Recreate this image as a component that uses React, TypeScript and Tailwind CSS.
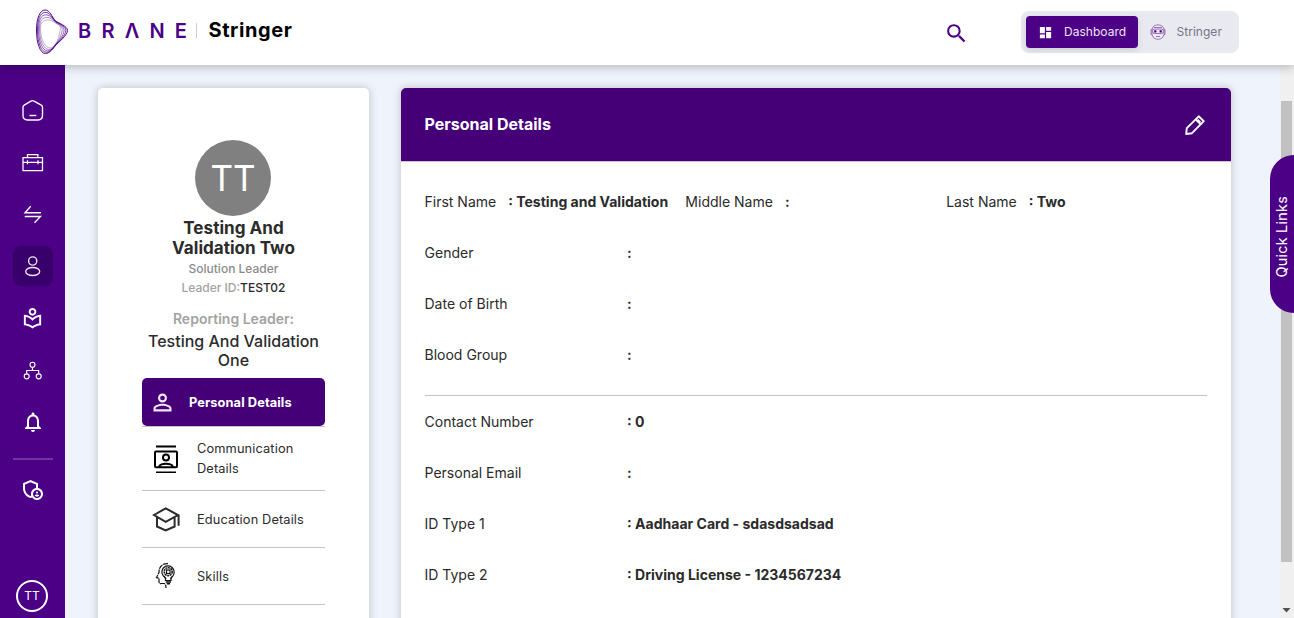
import type { ReactNode } from "react";
import {
  MdDashboard,
  MdNotificationsNone,
  MdOutlineAdminPanelSettings,
  MdOutlineLocalLibrary,
  MdPersonOutline,
  MdSearch,
} from "react-icons/md";

const OUTER = [10, 2, 15, 2, 17, 9, 20, 12.5, 24, 15.5, 32.5, 18, 32.5, 22.5, 32.5, 27, 24, 34, 20, 38, 17, 42, 14, 45.5, 10.5, 45.5, 5, 45.5, 1.5, 35, 1.5, 22, 1.5, 10, 5, 2, 10, 2];
const INNER = [9, 13, 14, 10, 19, 14, 22, 16, 25, 17, 26, 19, 25, 23, 24, 28, 23, 33, 20.5, 36, 19, 39, 17, 40, 15, 40, 11, 40, 6.5, 33, 6, 26, 5, 20, 5, 15, 9, 13];

function ringPath(t: number) {
  const p = OUTER.map((v, i) => (v + (INNER[i] - v) * t).toFixed(2));
  return `M${p.slice(0, 2).join(" ")}C${p.slice(2).join(" ")}Z`;
}

function BraneMark() {
  return (
    <svg width="34" height="48" viewBox="0 0 34 48" fill="none" stroke="#4c0085">
      {[0, 0.22, 0.46, 0.72, 1].map((t) => (
        <path key={t} d={ringPath(t)} strokeWidth={0.95 - t * 0.4} strokeOpacity={1 - t * 0.4} />
      ))}
    </svg>
  );
}

function Logo() {
  return (
    <div className="flex h-full items-center">
      <div className="mt-[2px]">
        <BraneMark />
      </div>
      <div className="mb-px ml-[9px] flex w-[109px] justify-between text-[20px] leading-none font-semibold text-[#4c0085]">
        <span>B</span>
        <span>R</span>
        <span>Λ</span>
        <span>N</span>
        <span>E</span>
      </div>
      <div className="mb-px ml-[9px] h-[15px] w-px bg-[#ccc]" />
      <span className="mb-[3px] ml-[11.5px] text-[20px] font-bold tracking-[0.6px] text-black">Stringer</span>
    </div>
  );
}

function RobotIcon() {
  return (
    <svg width="16" height="16" viewBox="0 0 16 16" fill="none" stroke="#8a55b0" strokeWidth="0.8">
      <path d="M3 3C5 .2 11 .2 13 3C14.5 5 14.5 11 13 13C11 16 5 16 3 13C1.5 11 1.5 5 3 3Z" />
      <path d="M2 5.5H1V10.5H2M14 5.5H15V10.5H14M4 3.5H12" />
      <rect x="2.5" y="5" width="11" height="4.5" rx="2" />
      <path d="M6 12.5H10" />
      <path d="M4.2 6.2h2.2v2.2h-2.2zM9.6 6.2h2.2v2.2h-2.2z" fill="#4c0085" stroke="none" />
    </svg>
  );
}

function Header() {
  return (
    <header className="relative z-10 flex h-[65px] shrink-0 items-center bg-white pr-[55px] pl-[35px] shadow-[0_2px_10px_rgba(0,0,0,0.25)]">
      <div className="h-full flex-1 pb-[3px]">
        <Logo />
      </div>
      <MdSearch className="mt-px mr-[52px] size-[25px] text-[#4c0085]" />
      <div className="mb-px flex h-[42px] w-[218px] items-center rounded-lg bg-[#e9eaef] pl-[5px] text-[12px] tracking-[0.03px]">
        <div className="flex h-8 w-[112px] items-center rounded bg-[#4c0085] pl-[12px] text-[#eee5f5] shadow-[0_2px_6px_rgba(0,0,0,0.12)]">
          <MdDashboard className="size-[15px] text-white" />
          <span className="ml-[11px]">Dashboard</span>
        </div>
        <div className="flex items-center pl-[11.5px] text-[#74758b]">
          <RobotIcon />
          <span className="ml-[11px]">Stringer</span>
        </div>
      </div>
    </header>
  );
}

function NavItem({ active, children }: { active?: boolean; children: ReactNode }) {
  return (
    <div className={`flex size-10 items-center justify-center rounded-lg ${active ? "bg-[#38006a]" : ""}`}>
      {children}
    </div>
  );
}

function Sidebar() {
  const line = { width: 24, height: 24, viewBox: "0.5 -0.5 24 24", fill: "none", stroke: "white", strokeWidth: 1.35 };
  return (
    <aside className="flex w-[65px] shrink-0 flex-col items-center bg-[#4c0085] pt-[25px] text-white">
      <div className="flex flex-col gap-3">
        <NavItem>
          <svg {...line}>
            <path d="M2.5 8.8Q2.5 7.4 3.7 6.6L10.4 2.6Q12 1.6 13.5 2.6L20.8 6.6Q22 7.3 22 8.8V16.8Q22 21.5 17.5 21.5H7Q2.5 21.5 2.5 17Z" />
            <path d="M9 17H15.8" strokeWidth="1.4" />
          </svg>
        </NavItem>
        <NavItem>
          <svg {...line} strokeWidth="1.25">
            <path d="M2.5 7H22V20H2.5ZM7 7V4.2H17.4V7M2.5 11.8H22M7 9.7V13.8M17.5 9.7V13.8" />
          </svg>
        </NavItem>
        <NavItem>
          <svg {...line}>
            <path d="M20.5 10.2H4.5L10.2 3.8M4.2 14H20L14 20.2" />
          </svg>
        </NavItem>
        <NavItem active>
          <svg {...line} strokeOpacity=".9">
            <circle cx="12.2" cy="6.5" r="4.1" />
            <ellipse cx="12.2" cy="17" rx="7" ry="4" />
          </svg>
        </NavItem>
        <NavItem>
          <MdOutlineLocalLibrary className="size-[23px]" />
        </NavItem>
        <NavItem>
          <svg {...line} strokeWidth="1.15">
            <circle cx="12" cy="6.2" r="2.5" />
            <circle cx="6.2" cy="17.8" r="2.5" />
            <circle cx="18.2" cy="17.8" r="2.5" />
            <path d="M12 8.7V12M6.2 15.3V12H18.2V15.3" />
          </svg>
        </NavItem>
        <NavItem>
          <MdNotificationsNone className="size-6" />
        </NavItem>
      </div>
      <div className="mt-4 h-[2px] w-10 bg-[#70369d]" />
      <div className="mt-[9px] mr-[2px]">
        <NavItem>
          <MdOutlineAdminPanelSettings className="size-6" />
        </NavItem>
      </div>
      <div className="mt-auto mr-px mb-[6px] flex size-8 items-center justify-center rounded-full border-2 border-white text-[12px]">
        TT
      </div>
    </aside>
  );
}

function ContactsIcon() {
  return (
    <svg width="28" height="28" viewBox="0 0 28 28" fill="none" stroke="black" strokeWidth="2">
      <path d="M4 1.5H24M4 27.5H24" />
      <rect x="3" y="6.5" width="22" height="15.8" rx="1" />
      <circle cx="14" cy="12.5" r="3" />
      <path d="M7 21.8C8.5 17.7 19.5 17.7 21 21.8" />
    </svg>
  );
}

function GraduationIcon() {
  return (
    <svg width="28" height="28" viewBox="0 0 28 28" fill="none" stroke="#2b2b2b" strokeWidth="2">
      <path d="M2 10L13.7 3.3L26 10L13.7 16.9ZM5 12V21.5L13.7 25.4L22.6 21.5V12M26.6 9.8V20.7" />
    </svg>
  );
}

function SkillsIcon() {
  return (
    <svg width="28" height="28" viewBox="0 0 28 28" fill="none" stroke="#111" strokeWidth="1.2">
      <path d="M16 1.7C10 1.4 6.8 5 7 10.5L4.5 15.5L7 16.2V20Q7 22 9.5 21.5H12Q14 21.8 14 26" strokeDasharray="5 .7" />
      <path d="M13.5 16C6.5 11 11 3.8 16 3.8S25.2 11 19 16V18.5H13.5Z" />
      <circle cx="16.2" cy="9.7" r="4" strokeWidth="1.5" strokeDasharray="2 .6" />
      <rect x="14.5" y="8" width="3.5" height="3.5" />
      <path d="M13.8 20H19M14.8 21.8H18" strokeWidth="1.6" />
      <path d="M12 14L14 17M20.5 14L18.5 17" />
    </svg>
  );
}

function MenuRow({ icon, label, height }: { icon: ReactNode; label: string; height: string }) {
  return (
    <div className={`flex items-center border-b border-[#c4c4c4] pl-[10px] ${height}`}>
      <div className="flex w-7 shrink-0 justify-center">{icon}</div>
      <span className="mt-px ml-[17px] w-[112px] text-[12.8px] leading-5 tracking-[0.12px]">{label}</span>
    </div>
  );
}

function ProfileCard() {
  return (
    <section className="flex h-[600px] w-[271px] shrink-0 flex-col items-center rounded-[5px] bg-white pt-[52px] text-center text-[#2b2b2b] shadow-[0_0_9px_rgba(0,0,0,0.22)]">
      <div className="mr-px flex size-[76px] shrink-0 items-center justify-center rounded-full bg-[#808080] pt-px text-[35px] text-white">
        TT
      </div>
      <h1 className="mt-[2px] w-[150px] text-[17.1px] leading-5 font-bold">Testing And Validation Two</h1>
      <p className="mt-px text-[12px] leading-[19px] font-medium text-[#8b8b8b]">Solution Leader</p>
      <p className="text-[12px] leading-[19px] font-medium text-[#a3a3a3]">
        Leader ID:<span className="text-[#2b2b2b]">TEST02</span>
      </p>
      <p className="mt-3 text-[14px] leading-5 font-semibold text-[#a3a3a3]">Reporting Leader:</p>
      <p className="mt-[3px] w-[180px] text-[16px] leading-[19px] font-medium">Testing And Validation One</p>
      <nav className="mt-[8px] w-[183px] text-left">
        <div className="flex h-12 items-center rounded-[5px] bg-[#450078] pl-[7px] text-[12.8px] font-bold tracking-[0.1px] text-white">
          <MdPersonOutline className="size-[27px] text-[#f0e8f6]" />
          <span className="mt-[2px] ml-[13px]">Personal Details</span>
        </div>
        <div className="h-px bg-[#c4c4c4]" />
        <MenuRow height="h-16" label="Communication Details" icon={<ContactsIcon />} />
        <MenuRow height="h-[57px]" label="Education Details" icon={<GraduationIcon />} />
        <MenuRow height="h-[57px]" label="Skills" icon={<SkillsIcon />} />
      </nav>
    </section>
  );
}

function Row({ label, value = "" }: { label: string; value?: string }) {
  return (
    <div className="flex h-[51px] items-center">
      <span className="w-[202.6px]">{label}</span>
      <span className="font-bold">: {value}</span>
    </div>
  );
}

function NameCell({ label, value = "" }: { label: string; value?: string }) {
  return (
    <div className="flex items-center whitespace-nowrap">
      <span className="mr-3">{label}</span>
      <span className="font-bold">: {value}</span>
    </div>
  );
}

function DetailsCard() {
  return (
    <section className="h-[600px] w-[830px] shrink-0 rounded-[5px] bg-white shadow-[0_0_9px_rgba(0,0,0,0.22)]">
      <div className="flex h-[73px] items-center justify-between rounded-t-[5px] bg-[#450078] pr-[24px] pl-[24px] text-white">
        <h2 className="mb-[2px] text-[16px] font-bold">Personal Details</h2>
        <svg width="24" height="24" viewBox="0 0 24 24" fill="none" stroke="white" strokeWidth="1.9" strokeLinejoin="round">
          <path d="M3.2 21L3.8 15.2L15.7 3.3L20.8 8.2L9 20.2Z" />
          <path d="M12.6 6.3L17.7 11.3M14.6 6.7L17.4 9.4" />
        </svg>
      </div>
      <div className="border-t border-[#c9c4ce] pr-[23.5px] pl-[24px] pt-[14px] text-[14.03px] text-[#2b2b2b]">
        <div className="grid h-[51px] grid-cols-3">
          <NameCell label="First Name" value="Testing and Validation" />
          <NameCell label="Middle Name" />
          <NameCell label="Last Name" value="Two" />
        </div>
        <Row label="Gender" />
        <Row label="Date of Birth" />
        <Row label="Blood Group" />
        <div className="mt-[15px] h-px bg-[#c4c4c4]" />
        <Row label="Contact Number" value="0" />
        <Row label="Personal Email" />
        <Row label="ID Type 1" value="Aadhaar Card - sdasdsadsad" />
        <Row label="ID Type 2" value="Driving License - 1234567234" />
      </div>
    </section>
  );
}

export default function App() {
  return (
    <div className="relative flex h-[618px] w-[1294px] flex-col overflow-hidden bg-[#eff3fb] font-['Inter',sans-serif]">
      <Header />
      <div className="flex h-[553px]">
        <Sidebar />
        <main className="flex flex-1 gap-[31.5px] overflow-hidden pt-[23px] pl-[33px]">
          <ProfileCard />
          <DetailsCard />
        </main>
        <div className="flex w-[14px] shrink-0 flex-col bg-[#f0f0f0] pt-9 pl-px">
          <div className="h-[461px] w-[11px] bg-[#c1c1c1]" />
          <svg className="mt-[46px]" width="11" height="5" viewBox="0 0 11 5" fill="#505050">
            <path d="M1.5 0H9.5L5.5 4.5Z" />
          </svg>
        </div>
      </div>
      <aside className="absolute top-[155px] right-0 flex h-[158px] w-6 items-center justify-center rounded-l-[24px] bg-[#4c0085] pt-[6px] text-[14.4px] tracking-[0.25px] text-white">
        <span className="rotate-180 whitespace-nowrap [writing-mode:vertical-rl]">Quick Links</span>
      </aside>
    </div>
  );
}
